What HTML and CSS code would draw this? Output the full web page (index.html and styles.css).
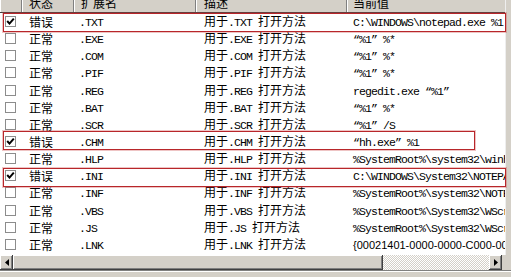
FILE: index.html
```html
<!DOCTYPE html>
<html>
<head>
<meta charset="utf-8">
<link rel="stylesheet" href="styles.css">
</head>
<body>
<div class="window">
  <div class="view">
    <div class="list">
      <div class="header">
        <div class="hc"></div>
        <div class="hc"><span class="ht">状态</span></div>
        <div class="hc"><span class="ht">扩展名</span></div>
        <div class="hc"><span class="ht">描述</span></div>
        <div class="hc last"><span class="ht">当前值</span></div>
      </div>
      <div class="rows">
        <div class="row">
          <div class="cell c0"><span class="cb"><svg viewBox="0 0 9 9" width="9" height="9"><polyline points="1.2,4 3.5,6.6 7.8,1.6" fill="none" stroke="#000" stroke-width="2"/></svg></span></div>
          <div class="cell c1">错误</div>
          <div class="cell c2"><span class="a">.TXT</span></div>
          <div class="cell c3">用于<span class="a">.TXT </span>打开方法</div>
          <div class="cell c4"><span class="a">C:\WINDOWS\notepad.exe %1</span></div>
        </div>
        <div class="row">
          <div class="cell c0"><span class="cb"></span></div>
          <div class="cell c1">正常</div>
          <div class="cell c2"><span class="a">.EXE</span></div>
          <div class="cell c3">用于<span class="a">.EXE </span>打开方法</div>
          <div class="cell c4"><span class="a">“%1” %*</span></div>
        </div>
        <div class="row">
          <div class="cell c0"><span class="cb"></span></div>
          <div class="cell c1">正常</div>
          <div class="cell c2"><span class="a">.COM</span></div>
          <div class="cell c3">用于<span class="a">.COM </span>打开方法</div>
          <div class="cell c4"><span class="a">“%1” %*</span></div>
        </div>
        <div class="row">
          <div class="cell c0"><span class="cb"></span></div>
          <div class="cell c1">正常</div>
          <div class="cell c2"><span class="a">.PIF</span></div>
          <div class="cell c3">用于<span class="a">.PIF </span>打开方法</div>
          <div class="cell c4"><span class="a">“%1” %*</span></div>
        </div>
        <div class="row">
          <div class="cell c0"><span class="cb"></span></div>
          <div class="cell c1">正常</div>
          <div class="cell c2"><span class="a">.REG</span></div>
          <div class="cell c3">用于<span class="a">.REG </span>打开方法</div>
          <div class="cell c4"><span class="a">regedit.exe “%1”</span></div>
        </div>
        <div class="row">
          <div class="cell c0"><span class="cb"></span></div>
          <div class="cell c1">正常</div>
          <div class="cell c2"><span class="a">.BAT</span></div>
          <div class="cell c3">用于<span class="a">.BAT </span>打开方法</div>
          <div class="cell c4"><span class="a">“%1” %*</span></div>
        </div>
        <div class="row">
          <div class="cell c0"><span class="cb"></span></div>
          <div class="cell c1">正常</div>
          <div class="cell c2"><span class="a">.SCR</span></div>
          <div class="cell c3">用于<span class="a">.SCR </span>打开方法</div>
          <div class="cell c4"><span class="a">“%1” /S</span></div>
        </div>
        <div class="row">
          <div class="cell c0"><span class="cb"><svg viewBox="0 0 9 9" width="9" height="9"><polyline points="1.2,4 3.5,6.6 7.8,1.6" fill="none" stroke="#000" stroke-width="2"/></svg></span></div>
          <div class="cell c1">错误</div>
          <div class="cell c2"><span class="a">.CHM</span></div>
          <div class="cell c3">用于<span class="a">.CHM </span>打开方法</div>
          <div class="cell c4"><span class="a">“hh.exe” %1</span></div>
        </div>
        <div class="row">
          <div class="cell c0"><span class="cb"></span></div>
          <div class="cell c1">正常</div>
          <div class="cell c2"><span class="a">.HLP</span></div>
          <div class="cell c3">用于<span class="a">.HLP </span>打开方法</div>
          <div class="cell c4"><span class="a">%SystemRoot%\system32\winhlp32.exe %1</span></div>
        </div>
        <div class="row">
          <div class="cell c0"><span class="cb"><svg viewBox="0 0 9 9" width="9" height="9"><polyline points="1.2,4 3.5,6.6 7.8,1.6" fill="none" stroke="#000" stroke-width="2"/></svg></span></div>
          <div class="cell c1">错误</div>
          <div class="cell c2"><span class="a">.INI</span></div>
          <div class="cell c3">用于<span class="a">.INI </span>打开方法</div>
          <div class="cell c4"><span class="a">C:\WINDOWS\System32\NOTEPAD.EXE %1</span></div>
        </div>
        <div class="row">
          <div class="cell c0"><span class="cb"></span></div>
          <div class="cell c1">正常</div>
          <div class="cell c2"><span class="a">.INF</span></div>
          <div class="cell c3">用于<span class="a">.INF </span>打开方法</div>
          <div class="cell c4"><span class="a">%SystemRoot%\system32\NOTEPAD.EXE %1</span></div>
        </div>
        <div class="row">
          <div class="cell c0"><span class="cb"></span></div>
          <div class="cell c1">正常</div>
          <div class="cell c2"><span class="a">.VBS</span></div>
          <div class="cell c3">用于<span class="a">.VBS </span>打开方法</div>
          <div class="cell c4"><span class="a">%SystemRoot%\System32\WScript.exe “%1” %*</span></div>
        </div>
        <div class="row">
          <div class="cell c0"><span class="cb"></span></div>
          <div class="cell c1">正常</div>
          <div class="cell c2"><span class="a">.JS</span></div>
          <div class="cell c3">用于<span class="a">.JS </span>打开方法</div>
          <div class="cell c4"><span class="a">%SystemRoot%\System32\WScript.exe “%1” %*</span></div>
        </div>
        <div class="row">
          <div class="cell c0"><span class="cb"></span></div>
          <div class="cell c1">正常</div>
          <div class="cell c2"><span class="a">.LNK</span></div>
          <div class="cell c3">用于<span class="a">.LNK </span>打开方法</div>
          <div class="cell c4"><span class="s">{00021401-0000-0000-C000-000000000046}</span></div>
        </div>
      </div>
    </div>
    <div class="vstrip"></div>
  </div>
  <div class="hbar">
    <div class="hscroll">
      <div class="btn"><svg width="4" height="7" viewBox="0 0 4 7"><polygon points="4,0 0,3.5 4,7" fill="#000"/></svg></div>
      <div class="thumb"></div>
      <div class="track"></div>
      <div class="btn"><svg width="4" height="7" viewBox="0 0 4 7"><polygon points="0,0 4,3.5 0,7" fill="#000"/></svg></div>
    </div>
    <div class="corner"></div>
  </div>
  <div class="bottom"></div>
  <div class="mark m1"></div>
  <div class="mark m2"></div>
  <div class="mark m3"></div>
</div>
</body>
</html>
```

FILE: styles.css
```css
html, body {
  margin: 0;
  padding: 0;
}
body {
  width: 511px;
  height: 277px;
  overflow: hidden;
  background: #d4d0c8;
  font-family: "Noto Sans CJK SC", "Noto Sans", sans-serif;
  font-size: 12px;
  color: #000;
}
.window {
  position: relative;
  width: 511px;
  height: 277px;
  display: flex;
  flex-direction: column;
}
.view {
  display: flex;
  height: 255px;
}
.list {
  width: 505px;
  background: #fff;
  overflow: hidden;
  display: flex;
  flex-direction: column;
}
.vstrip {
  flex: 1;
  background: #d4d0c8;
  box-shadow: inset 1px 0 #eeeeee;
}
.header {
  display: grid;
  grid-template-columns: 22px 52px 122px 151px 1fr;
  height: 12px;
  background: #d4d0c8;
  border-bottom: 1px solid #404040;
  overflow: hidden;
}
.hc {
  box-sizing: border-box;
  border-right: 1px solid #808080;
  box-shadow: inset 1px 0 #fff;
  overflow: hidden;
  white-space: nowrap;
}
.hc.last {
  border-right: none;
}
.ht {
  display: block;
  line-height: 12px;
  margin-top: -3px;
  padding-left: 7px;
}
.hc:nth-child(4) .ht { padding-left: 8px; }
.hc:nth-child(5) .ht { padding-left: 6px; }
.rows {
  display: flex;
  flex-direction: column;
}
.row {
  display: grid;
  grid-template-columns: 22px 52px 122px 151px 1fr;
  height: 17.15px;
  align-items: center;
  white-space: nowrap;
}
.cell {
  overflow: hidden;
  line-height: 14px;
  padding-top: 1px;
}
.c0 { padding-left: 5px; padding-top: 0; display: flex; align-items: center; }
.c1 { padding-left: 7px; }
.c2 { padding-left: 5px; }
.c3 { padding-left: 8px; }
.c4 { padding-left: 6px; }
.cb {
  box-sizing: border-box;
  width: 11px;
  height: 11px;
  border: 1px solid #8c8c8c;
  background: #fff;
  display: flex;
  align-items: center;
  justify-content: center;
}
.a {
  font-family: "Liberation Mono", monospace;
  font-size: 11.5px;
  letter-spacing: -0.9px;
}
.s {
  font-family: "Liberation Sans", sans-serif;
  font-size: 11px;
}
.hbar {
  display: flex;
  height: 15px;
}
.hscroll {
  width: 502px;
  display: flex;
  background: #d4d0c8;
}
.btn {
  width: 13px;
  box-sizing: border-box;
  background: #d4d0c8;
  box-shadow: inset -1px -1px #404040, inset 1px 1px #fff, inset -2px -2px #808080;
  display: flex;
  align-items: center;
  justify-content: center;
}
.thumb {
  width: 370px;
  background: #d4d0c8;
  box-shadow: inset -1px -1px #404040, inset 1px 1px #fff, inset -2px -2px #808080;
}
.track {
  flex: 1;
  background: repeating-conic-gradient(#d4d0c8 0 25%, #fff 0 50%) 0 0 / 2px 2px;
}
.corner {
  flex: 1;
  background: #d4d0c8;
}
.bottom {
  flex: 1;
  background: #d4d0c8;
  border-top: 1px solid #808080;
  box-shadow: inset 0 1px #fff;
}
.mark {
  position: absolute;
  left: 3px;
  height: 19px;
  box-sizing: border-box;
  border: 1px solid #b8262a;
  box-shadow: 0 0 0 1px rgba(200, 60, 60, 0.3);
}
.m1 { top: 13px; width: 503px; }
.m2 { top: 131px; width: 472px; }
.m3 { top: 168px; width: 503px; }
```
